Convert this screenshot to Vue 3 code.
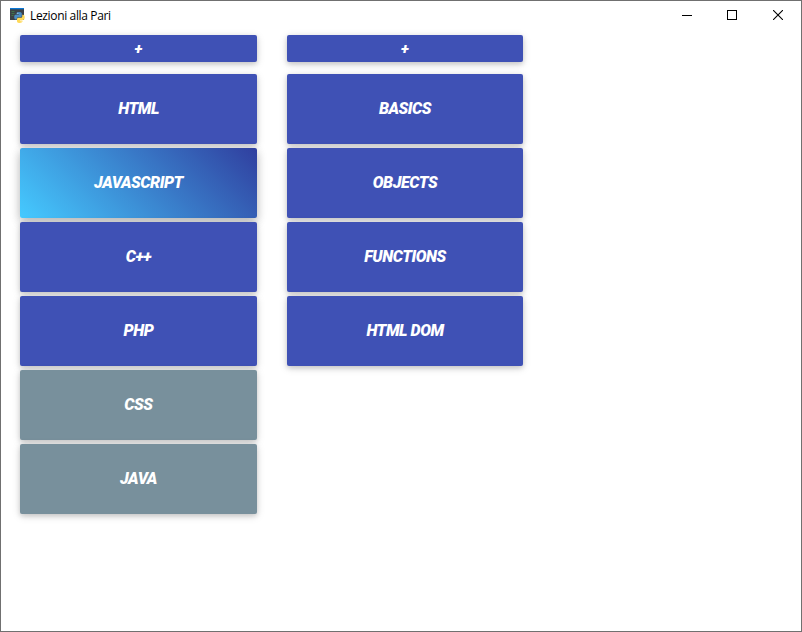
<script setup>
const columns = [
  {
    id: 'subjects',
    items: [
      { label: 'HTML', kind: 'primary' },
      { label: 'JAVASCRIPT', kind: 'active' },
      { label: 'C++', kind: 'primary' },
      { label: 'PHP', kind: 'primary' },
      { label: 'CSS', kind: 'muted' },
      { label: 'JAVA', kind: 'muted' },
    ],
  },
  {
    id: 'topics',
    items: [
      { label: 'BASICS', kind: 'primary' },
      { label: 'OBJECTS', kind: 'primary' },
      { label: 'FUNCTIONS', kind: 'primary' },
      { label: 'HTML DOM', kind: 'primary' },
    ],
  },
]
</script>

<template>
  <div class="window">
    <header class="titlebar">
      <svg class="app-icon" width="16" height="16" viewBox="0 0 16 16">
        <rect x="0" y="0" width="14" height="12" fill="#3c4146" />
        <rect x="0" y="0" width="14" height="1.3" fill="#0a78d7" />
        <path d="M1.5 3.5h3M1.5 5.5h3M1.5 7.5h2" stroke="#3f7a4a" stroke-width="0.9" />
        <path d="M6.5 5.2Q6.5 4 9 4T11.8 5.3V8Q11.8 9.3 10.3 9.3H8.2Q6.8 9.3 6.8 10.8V11.6H5.8Q4.2 11.6 4.2 9T5.8 6.8H9V6.2H6.5Z" fill="#4a8cc2" />
        <path d="M12.3 6.7H13.2Q14.8 6.9 14.8 9.3T13.2 12H10V12.6H12.5V13.6Q12.3 15 9.7 15T7 13.5V11Q7.1 9.8 8.5 9.8H10.8Q12.3 9.7 12.3 8.2Z" fill="#ffd958" />
        <circle cx="7.8" cy="5.2" r="0.5" fill="#d8e5ee" />
        <circle cx="11.2" cy="13.8" r="0.5" fill="#fff6ce" />
      </svg>
      <span class="title">Lezioni alla Pari</span>
      <div class="controls">
        <button class="control minimize" aria-label="Minimize">
          <svg width="10" height="10" viewBox="0 0 10 10" shape-rendering="crispEdges">
            <rect x="0" y="5" width="10" height="1" fill="#000" />
          </svg>
        </button>
        <button class="control" aria-label="Maximize">
          <svg width="10" height="10" viewBox="0 0 10 10" shape-rendering="crispEdges">
            <rect x="0.5" y="0.5" width="9" height="9" fill="none" stroke="#000" />
          </svg>
        </button>
        <button class="control" aria-label="Close">
          <svg width="10" height="10" viewBox="0 0 10 10">
            <path d="M0 0L10 10M10 0L0 10" stroke="#000" stroke-width="1.1" />
          </svg>
        </button>
      </div>
    </header>
    <main class="board">
      <section v-for="column in columns" :key="column.id" class="column">
        <button class="tile add">+</button>
        <button v-for="item in column.items" :key="item.label" class="tile" :class="item.kind">
          {{ item.label }}
        </button>
      </section>
    </main>
  </div>
</template>

<style>
body {
  margin: 0;
}
</style>

<style scoped>
.window {
  box-sizing: border-box;
  width: 802px;
  height: 632px;
  border: 1px solid #707070;
  background: #fff;
  overflow: hidden;
}
.titlebar {
  display: flex;
  align-items: center;
  height: 30px;
  padding-left: 9px;
}
.app-icon {
  flex: none;
  margin-top: -1px;
}
.title {
  margin-left: 4px;
  font: 12px/16px 'Open Sans', 'Noto Sans', sans-serif;
  letter-spacing: -0.35px;
  color: #000;
}
.controls {
  display: flex;
  align-self: flex-start;
  margin-left: auto;
}
.control {
  display: flex;
  align-items: center;
  justify-content: center;
  width: 46px;
  height: 28px;
  padding: 0;
  border: 0;
  background: none;
}
.minimize {
  width: 44px;
}
.board {
  display: grid;
  grid-template-columns: 237px 236px;
  column-gap: 30px;
  align-items: start;
  padding: 4px 19px 0;
}
.column {
  display: flex;
  flex-direction: column;
  gap: 4px;
}
.tile {
  height: 70px;
  padding: 0;
  border: 0;
  border-radius: 2px;
  background: #3f51b5;
  box-shadow:
    0 2px 5px 0 rgba(0, 0, 0, 0.16),
    0 2px 10px 0 rgba(0, 0, 0, 0.12);
  color: #fff;
  font: italic 900 16px/20px Roboto, sans-serif;
  letter-spacing: -0.45px;
  text-align: center;
}
.add {
  height: 27px;
  margin-bottom: 8px;
  font-size: 15px;
  letter-spacing: 0;
}
.active {
  background: linear-gradient(45deg, #45caff 0%, #303f9f 100%);
  box-shadow:
    0 4px 8px 0 rgba(0, 0, 0, 0.18),
    0 3px 12px 0 rgba(0, 0, 0, 0.14);
}
.muted {
  background: #78909c;
}
</style>
